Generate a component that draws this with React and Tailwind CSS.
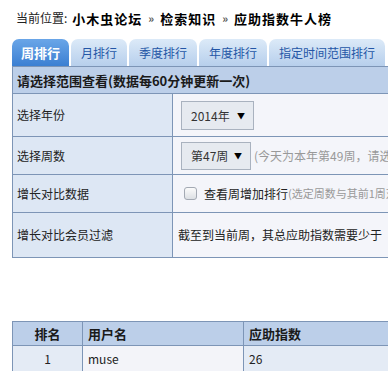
import React from 'react';

const tabs = ['周排行', '月排行', '季度排行', '年度排行', '指定时间范围排行'];

function Select({ label, className }) {
  return (
    <div
      className={`inline-flex items-center justify-between border border-[#a9b2bf] bg-[#e6eaf0] pl-[9px] pr-[8px] text-[12px] text-[#333] ${className}`}
    >
      <span>{label}</span>
      <span className="text-[8px] text-black">▼</span>
    </div>
  );
}

function App() {
  return (
    <div className="w-[388px] h-[371px] overflow-hidden bg-white font-['Noto_Sans_CJK_SC',sans-serif] leading-none">
      <div className="w-[640px]">
        {/* Breadcrumb */}
        <div className="flex items-center h-[18px] mt-[9px] pl-4 text-[12px] text-[#222]">
          <span>当前位置:</span>
          <span className="ml-[5px] font-bold text-[13px] tracking-[1px] text-black">小木虫论坛</span>
          <span className="mx-[6px] font-bold text-[11px] text-[#555]">»</span>
          <span className="font-bold text-[13px] tracking-[1px] text-black">检索知识</span>
          <span className="mx-[6px] font-bold text-[11px] text-[#555]">»</span>
          <span className="font-bold text-[13px] tracking-[1px] text-black">应助指数牛人榜</span>
        </div>

        {/* Tabs */}
        <div className="flex gap-[2px] ml-3 mt-[12px]">
          {tabs.map((t, i) => (
            <div
              key={t}
              className={
                i === 0
                  ? 'h-[27px] px-[9px] flex items-center rounded-t-[7px] bg-gradient-to-b from-[#6aa6e8] to-[#3b7fd2] text-white font-bold text-[13px]'
                  : 'h-[27px] px-[10px] flex items-center rounded-t-[7px] bg-gradient-to-b from-[#dceaf8] to-[#b7cfec] text-[#2456a6] text-[12px]'
              }
            >
              {t}
            </div>
          ))}
        </div>

        {/* Filter table */}
        <table className="ml-3 border-collapse border border-[#7d95b6] w-[560px] text-[12px] text-[#222]">
          <tbody>
            <tr className="h-[27px] bg-[#bccfe9]">
              <td colSpan={2} className="pl-[4px] font-bold text-[13px] text-[#1a1a1a] border border-[#7d95b6]">
                请选择范围查看(数据每60分钟更新一次)
              </td>
            </tr>
            <tr className="h-[43px]">
              <td className="w-[160px] pl-[4px] bg-[#dde7f4] border border-[#7d95b6]">选择年份</td>
              <td className="pl-[8px] bg-[#f4f5fa] border border-[#7d95b6]">
                <Select label="2014年" className="w-[73px] h-[29px] mt-[1px]" />
              </td>
            </tr>
            <tr className="h-[38px]">
              <td className="pl-[4px] bg-[#dde7f4] border border-[#7d95b6]">选择周数</td>
              <td className="pl-[8px] bg-[#f4f5fa] border border-[#7d95b6]">
                <div className="flex items-center">
                  <Select label="第47周" className="w-[70px] h-[28px]" />
                  <span className="ml-[3px] text-[#999]">(今天为本年第49周，请选择之前的周数)</span>
                </div>
              </td>
            </tr>
            <tr className="h-[38px]">
              <td className="pl-[4px] bg-[#dde7f4] border border-[#7d95b6]">增长对比数据</td>
              <td className="pl-[11px] bg-[#f4f5fa] border border-[#7d95b6]">
                <div className="flex items-center">
                  <span className="w-[13px] h-[13px] rounded-[3px] border border-[#a3a9b3] bg-gradient-to-b from-[#fbfbfb] to-[#dcdfe4]" />
                  <span className="ml-[7px] text-[12px]">查看周增加排行</span>
                  <span className="text-[11px] text-[#999]">(选定周数与其前1周对比)</span>
                </div>
              </td>
            </tr>
            <tr className="h-[45px]">
              <td className="pl-[4px] bg-[#dde7f4] border border-[#7d95b6]">增长对比会员过滤</td>
              <td className="pl-[5px] bg-[#f4f5fa] border border-[#7d95b6] text-[12px]">截至到当前周，其总应助指数需要少于</td>
            </tr>
          </tbody>
        </table>

        {/* Ranking table */}
        <table className="ml-3 mt-[63px] border-collapse border border-[#7d95b6] w-[560px] text-[12px] text-[#222]">
          <thead>
            <tr className="h-[24px] bg-[#bccfe9] text-[13px] font-bold text-[#1a1a1a]">
              <th className="w-[70px] text-center border border-[#7d95b6]">排名</th>
              <th className="w-[161px] text-left pl-[5px] border border-[#7d95b6]">用户名</th>
              <th className="text-left pl-[5px] border border-[#7d95b6]">应助指数</th>
            </tr>
          </thead>
          <tbody>
            <tr className="h-[26px]">
              <td className="text-center bg-[#e4ebf5] border border-[#7d95b6]">1</td>
              <td className="pl-[5px] bg-[#f3f4f9] border border-[#7d95b6]">muse</td>
              <td className="pl-[5px] bg-[#e4ebf5] border border-[#7d95b6]">26</td>
            </tr>
          </tbody>
        </table>
      </div>
    </div>
  );
}

export default App;
